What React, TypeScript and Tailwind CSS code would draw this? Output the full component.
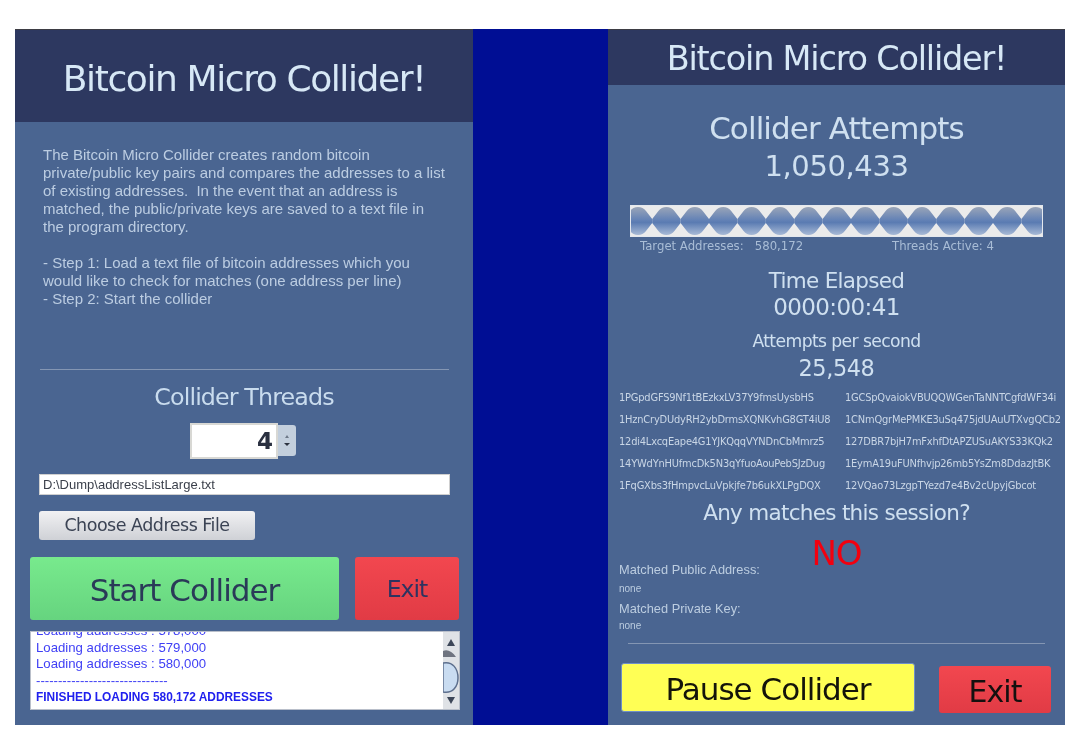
const tahoma = 'font-["DejaVu_Sans",sans-serif]'

const addresses = [
  ['1PGpdGFS9Nf1tBEzkxLV37Y9fmsUysbHS', '1GCSpQvaiokVBUQQWGenTaNNTCgfdWF34i'],
  ['1HznCryDUdyRH2ybDrmsXQNKvhG8GT4iU8', '1CNmQgrMePMKE3uSq475jdUAuUTXvgQCb2'],
  ['12di4LxcqEape4G1YJKQqqVYNDnCbMmrz5', '127DBR7bjH7mFxhfDtAPZUSuAKYS33KQk2'],
  ['14YWdYnHUfmcDk5N3qYfuoAouPebSJzDug', '1EymA19uFUNfhvjp26mb5YsZm8DdazJtBK'],
  ['1FqGXbs3fHmpvcLuVpkjfe7b6ukXLPgDQX', '12VQao73LzgpTYezd7e4Bv2cUpyjGbcot'],
]

function ProgressWave() {
  const centers = Array.from({ length: 15 }, (_, i) => 8 + i * 28.4)
  return (
    <svg width="413" height="32" viewBox="0 0 413 32" className="block">
      <defs>
        <linearGradient id="blob" x1="0" y1="0" x2="0" y2="1">
          <stop offset="0" stopColor="#9aa5b8" />
          <stop offset="0.45" stopColor="#6583b6" />
          <stop offset="0.55" stopColor="#5a7bb2" />
          <stop offset="1" stopColor="#a8bad6" />
        </linearGradient>
      </defs>
      <rect width="413" height="32" fill="#ebebeb" />
      {centers.map((c) => (
        <path
          key={c}
          d={`M${c - 14.2} 14 L${c - 8} 6 Q${c - 5} 2 ${c} 2 Q${c + 5} 2 ${c + 8} 6 L${c + 14.2} 14 L${c + 14.2} 18 L${c + 8} 26 Q${c + 5} 30 ${c} 30 Q${c - 5} 30 ${c - 8} 26 L${c - 14.2} 18 Z`}
          fill="url(#blob)"
        />
      ))}
      <rect x="0.5" y="0.5" width="412" height="31" fill="none" stroke="#e4e8ee" />
    </svg>
  )
}

function Scrollbar() {
  return (
    <div className="relative h-full w-[16px] shrink-0 overflow-hidden bg-[#dfe2e6]">
      <svg width="16" height="77" viewBox="0 0 16 77" className="block">
        <path d="M4 14 L8 7 L12 14 Z" fill="#3c4658" />
        <path d="M0 19 C4 17 9 19 13 25 L0 25 Z" fill="#6f7480" />
        <path d="M0 31 C10 29 15 37 15 46 C15 54 10 62 0 60 Z" fill="#c9dcf1" stroke="#5d6f8d" strokeWidth="1.5" />
        <path d="M4 65 L12 65 L8 72 Z" fill="#3c4658" />
      </svg>
    </div>
  )
}

export default function App() {
  return (
    <div className={`min-h-[737px] bg-white pl-[15px] pt-[29px] blur-[0.4px] ${tahoma}`}>
      <div className="flex h-[696px] w-[1050px] items-stretch">
        {/* setup window */}
        <div className="flex w-[458px] flex-col overflow-hidden bg-[#4a6591]">
          <div className="flex h-[93px] shrink-0 items-center justify-center border-t border-[#3d3d44] bg-[#2d3860] pt-[5px] text-[36px] tracking-[-1.4px] text-[#d7e8f6]">
            Bitcoin Micro Collider!
          </div>
          <div className="mt-[24px] h-[223px] shrink-0 whitespace-pre pl-[28px] font-['Liberation_Sans',sans-serif] text-[15px] leading-[18px] text-[#bccde2]">
            {`The Bitcoin Micro Collider creates random bitcoin
private/public key pairs and compares the addresses to a list
of existing addresses.  In the event that an address is
matched, the public/private keys are saved to a text file in
the program directory.

- Step 1: Load a text file of bitcoin addresses which you
would like to check for matches (one address per line)
- Step 2: Start the collider`}
          </div>
          <div className="ml-[25px] h-px w-[409px] shrink-0 bg-[#8496b3]" />
          <div className="mt-[11px] text-center text-[23.8px] leading-[32px] tracking-[-0.9px] text-[#c9dcee]">
            Collider Threads
          </div>
          <div className="mt-[10px] flex justify-center pr-[2px]">
            <div className="flex h-[36px] w-[88px] items-center justify-end border-2 border-[#d8d8d4] bg-white pr-[3px] text-[23px] font-bold text-[#2a3040]">
              4
            </div>
            <div className="mt-[2px] flex h-[31px] w-[18px] flex-col items-center justify-center gap-[5px] rounded-r-[3px] bg-[#c3cfdd]">
              <div className="h-0 w-0 border-x-[2.5px] border-b-[3px] border-x-transparent border-b-[#6d7888]" />
              <div className="h-0 w-0 border-x-[3px] border-t-[3px] border-x-transparent border-t-[#2c3340]" />
            </div>
          </div>
          <div className="ml-[24px] mt-[15px] flex h-[21px] w-[411px] shrink-0 items-center border border-[#cfcfcf] bg-white pl-[3px] font-['Liberation_Sans',sans-serif] text-[13px] text-[#3a3f4a]">
            D:\Dump\addressListLarge.txt
          </div>
          <div className="ml-[24px] mt-[16px] flex h-[29px] w-[216px] shrink-0 items-center justify-center rounded-[3px] bg-gradient-to-b from-[#f1f1f3] to-[#cfd1d6] text-[17.5px] tracking-[-0.5px] text-[#3b4354]">
            Choose Address File
          </div>
          <div className="ml-[15px] mt-[17px] flex shrink-0 gap-[16px]">
            <div className="flex h-[63px] w-[309px] items-center justify-center rounded-[3px] bg-gradient-to-b from-[#78ea8d] to-[#66d47f] pt-[3px] text-[31px] tracking-[-1px] text-[#2a3a58]">
              Start Collider
            </div>
            <div className="flex h-[63px] w-[104px] items-center justify-center rounded-[3px] bg-gradient-to-b from-[#f2474f] to-[#e13b45] pt-[2px] text-[23.5px] tracking-[-1px] text-[#2f3360]">
              Exit
            </div>
          </div>
          <div className="ml-[15px] mt-[11px] flex h-[79px] w-[430px] shrink-0 overflow-hidden border border-[#b9bfca] bg-white">
            <div className="flex min-w-0 flex-1 flex-col justify-end overflow-hidden pb-[3px] pl-[5px] font-['Liberation_Sans',sans-serif] text-[13.2px] leading-[16.6px] text-[#3f3ff5]">
              <div className="whitespace-nowrap">Loading addresses : 578,000</div>
              <div className="whitespace-nowrap">Loading addresses : 579,000</div>
              <div className="whitespace-nowrap">Loading addresses : 580,000</div>
              <div className="whitespace-nowrap">------------------------------</div>
              <div className="whitespace-nowrap text-[11.9px] font-bold text-[#2020ee]">FINISHED LOADING 580,172 ADDRESSES</div>
            </div>
            <Scrollbar />
          </div>
        </div>

        {/* gap between the two windows */}
        <div className="w-[135px] bg-[#000e94]" />

        {/* running window */}
        <div className="flex w-[457px] flex-col overflow-hidden bg-[#4a6591] text-center text-[#cfe0f0]">
          <div className="flex h-[56px] shrink-0 items-center justify-center border-t border-[#3d3d44] bg-[#2d3860] pt-[3px] text-[33.5px] tracking-[-1.2px] text-[#d7e8f6]">
            Bitcoin Micro Collider!
          </div>
          <div className="mt-[24px] shrink-0 text-[31px] leading-[38px] tracking-[-0.9px]">Collider Attempts</div>
          <div className="shrink-0 text-[29px] leading-[38px] tracking-[-0.4px]">1,050,433</div>
          <div className="ml-[22px] mt-[20px] shrink-0">
            <ProgressWave />
          </div>
          <div className="flex h-[20px] shrink-0 items-center pl-[32px] text-[11.7px] text-[#a9bdd6]">
            <span className="w-[252px] whitespace-pre text-left">Target Addresses:   580,172</span>
            <span>Threads Active: 4</span>
          </div>
          <div className="mt-[10px] shrink-0 text-[21.5px] leading-[28px] tracking-[-0.7px]">Time Elapsed</div>
          <div className="shrink-0 text-[23px] leading-[24px] tracking-[-0.6px]">0000:00:41</div>
          <div className="mt-[9px] shrink-0 text-[17.2px] leading-[26px] tracking-[-0.6px]">Attempts per second</div>
          <div className="shrink-0 text-[22.4px] leading-[28px] tracking-[-0.4px]">25,548</div>
          <div className="mt-[5px] flex shrink-0 flex-col text-left text-[9.9px] leading-[22px] tracking-[-0.2px] text-[#c9d6e6]">
            {addresses.map(([a, b]) => (
              <div key={a} className="flex whitespace-nowrap pl-[11px]">
                <span className="w-[226px] shrink-0">{a}</span>
                <span>{b}</span>
              </div>
            ))}
          </div>
          <div className="mt-[1px] shrink-0 text-[21.5px] leading-[30px] tracking-[-0.7px]">Any matches this session?</div>
          <div className="mt-[6px] h-[38px] shrink-0 text-[34px] leading-[38px] tracking-[-1px] text-[#f2000f]">NO</div>
          <div className="-mt-[10px] shrink-0 pl-[11px] text-left font-['Liberation_Sans',sans-serif] text-[#bccde0]">
            <div className="text-[12.8px] leading-[16px]">Matched Public Address:</div>
            <div className="mt-[3px] text-[10px] leading-[16px]">none</div>
            <div className="mt-[4px] text-[12.8px] leading-[16px]">Matched Private Key:</div>
            <div className="mt-[1px] text-[10px] leading-[16px]">none</div>
          </div>
          <div className="ml-[20px] mt-[9px] h-px w-[417px] shrink-0 bg-[#8496b3]" />
          <div className="ml-[13px] mt-[19px] flex shrink-0 items-start gap-[24px]">
            <div className="flex h-[49px] w-[294px] items-center justify-center rounded-[3px] border border-[#6f8fc8] bg-[#ffff55] pt-[4px] text-[31px] tracking-[-1px] text-[#14140a]">
              Pause Collider
            </div>
            <div className="mt-[3px] flex h-[47px] w-[112px] items-center justify-center rounded-[3px] bg-gradient-to-b from-[#f2474f] to-[#e13b45] pt-[4px] text-[30px] tracking-[-1px] text-[#14100f]">
              Exit
            </div>
          </div>
        </div>
      </div>
    </div>
  )
}
